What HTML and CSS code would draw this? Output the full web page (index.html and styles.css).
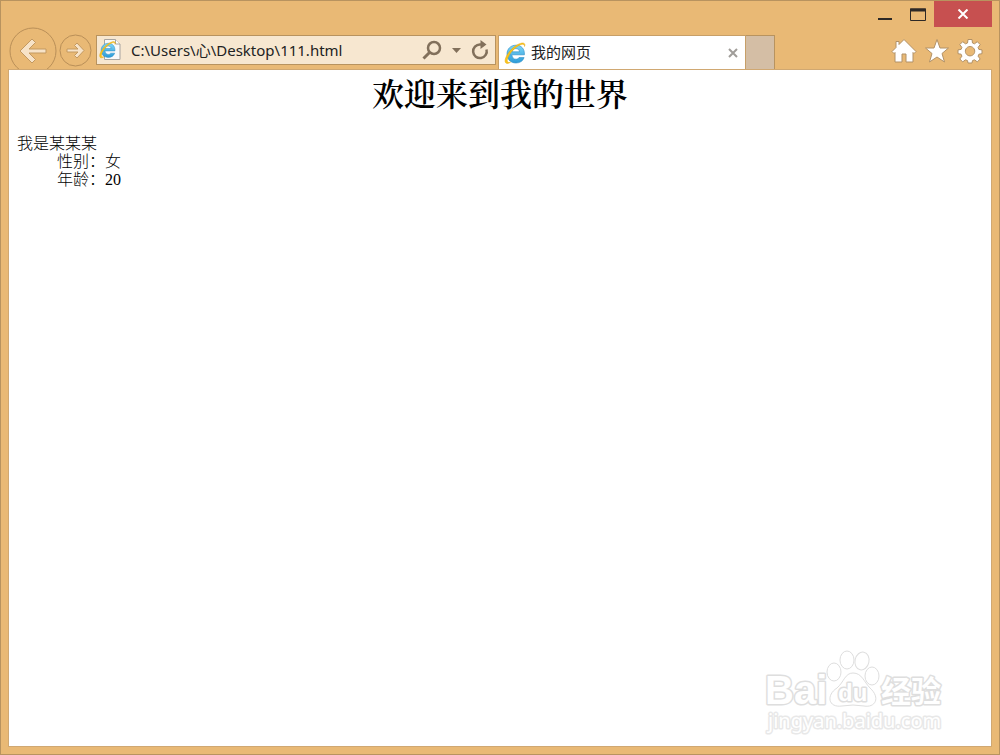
FILE: index.html
```html
<!DOCTYPE html>
<html lang="zh-CN">
<head>
<meta charset="utf-8">
<title>我的网页</title>
<link rel="stylesheet" href="styles.css">
</head>
<body>
<svg class="defs" aria-hidden="true">
  <defs>
    <linearGradient id="blue" x1="0" y1="0" x2="0" y2="1"><stop offset="0" stop-color="#7fd6f7"/><stop offset="1" stop-color="#2b9bd8"/></linearGradient>
    <symbol id="ie" viewBox="0 0 24 24">
      <path d="M7.200 13.800H21.400C21.800 7.800 18.300 4.200 13 4.200C7.500 4.200 4 8 4 13C4 18.300 7.600 22 13 22C17 22 20 20 21.100 16.600H16C15.300 17.700 14.400 18.200 13 18.200C10.600 18.200 9.200 16.600 9 14.200M9.100 10.800C9.500 8.800 10.800 7.600 12.900 7.600C15 7.600 16.200 8.800 16.500 10.800Z" fill="url(#blue)" fill-rule="evenodd" stroke="#2589c4" stroke-width=".6"/>
      <path d="M21.500 5.500C22.600 3 21.200 1.200 17.500 2.400C11 4.200 3.500 12.500 2.200 18.500C1.500 22.500 4 23.600 7.500 21.200C4.800 22 3.600 20.800 4.600 17.600C6.200 12.400 12.500 5.600 17.600 3.700C20.200 2.700 21.600 3.500 21.500 5.500Z" fill="#fbc51b" stroke="#e4a60c" stroke-width=".5"/>
    </symbol>
  </defs>
</svg>
<div class="window">
  <header class="titlebar">
    <button class="caption" aria-label="最小化"><svg width="14" height="16"><path d="M0 13h14" stroke="#2d2926" stroke-width="2"/></svg></button>
    <button class="caption" aria-label="最大化"><svg width="16" height="16"><path d="M.5 3h15v11.500h-15z" fill="none" stroke="#2d2926"/><path d="M0 4h16" stroke="#2d2926" stroke-width="3"/></svg></button>
    <button class="caption close" aria-label="关闭"><svg width="12" height="10"><path d="M1.500 .5l9 9M10.500 .5l-9 9" stroke="#fff" stroke-width="2"/></svg></button>
  </header>
  <nav class="toolbar">
    <button class="back" aria-label="后退"><svg width="48" height="48" viewBox="0 0 48 48"><circle cx="24" cy="24" r="23" fill="none" stroke="#b98f58"/><path d="M11 24L23 12L26.500 15.500L20 22H37V26H20L26.500 32.500L23 36Z" fill="#f7e3c8" stroke="#c39961"/></svg></button>
    <button class="forward" aria-label="前进"><svg width="33" height="33" viewBox="0 0 33 33"><circle cx="16.500" cy="16.500" r="15.500" fill="none" stroke="#b98f58"/><path d="M25 16.500L18 9L15.500 11.500L19 15H8V18H19L15.500 21.500L18 24Z" fill="#f7e3c8" stroke="#c39961"/></svg></button>
    <form class="address">
      <svg width="22" height="24" viewBox="0 0 22 24" aria-hidden="true"><path d="M5.500 1.500h11l4.500 4.500v15.500h-15.500z" fill="#f9f9f9" stroke="#a8a49f"/><path d="M16.500 1.500v4.500h4.500" fill="#fff" stroke="#a8a49f"/><use href="#ie" x="-1" y="2" width="19" height="19"/></svg>
      <input class="url" type="text" aria-label="地址" value="C:\Users\心\Desktop\111.html">
      <button type="button" aria-label="搜索"><svg width="20" height="20"><circle cx="12" cy="8" r="6" fill="none" stroke="#82705b" stroke-width="2.500"/><path d="M7.500 12.500L1.500 18.500" stroke="#82705b" stroke-width="3"/></svg></button>
      <button type="button" aria-label="显示地址"><svg width="9" height="5"><path d="M0 0h9L4.500 5z" fill="#82705b"/></svg></button>
      <button type="button" aria-label="刷新"><svg width="18" height="20"><path d="M15.500 9.500A6.800 6.800 0 1 1 9 4.500H11" fill="none" stroke="#82705b" stroke-width="2.500"/><path d="M9.500 0L15.500 4.500L9.500 9z" fill="#82705b"/></svg></button>
    </form>
    <div class="tab">
      <svg width="24" height="24" aria-hidden="true"><use href="#ie" width="24" height="24"/></svg>
      <span class="tab-title">我的网页</span>
      <button aria-label="关闭选项卡"><svg width="10" height="10"><path d="M1 1l8 8M9 1l-8 8" stroke="#a09d99" stroke-width="2"/></svg></button>
    </div>
    <button class="new-tab" aria-label="新建选项卡"></button>
    <div class="tools">
      <button aria-label="主页"><svg width="26" height="26" viewBox="0 0 26 26"><path d="M1 13.500L5 9.500V3.500H8V6.500L13 1.500L25 13.500L23 15.500L22 14.500V24H15V16H11V24H4V14.500L3 15.500Z" fill="#fff" stroke="#b29166"/></svg></button>
      <button aria-label="收藏夹"><svg width="26" height="26" viewBox="0 0 26 26"><path d="M13 1.500L16 10H24.500L18 15.500L20.500 24L13 19L5.500 24L8 15.500L1.500 10H10Z" fill="#fff" stroke="#b29166"/></svg></button>
      <button aria-label="工具"><svg width="26" height="26" viewBox="0 0 26 26"><path d="M11 1.500h4l.5 3.500 2 .8 2.800-2.100 2.900 2.900-2.100 2.800.8 2 3.100.5v3.800l-3.100.5-.8 2 2.100 2.800-2.900 2.900-2.800-2.100-2 .8-.5 2.400h-4l-.5-2.400-2-.8-2.800 2.100-2.900-2.900 2.100-2.800-.8-2-3.100-.5v-3.800l3.100-.5.8-2-2.100-2.800 2.900-2.900 2.800 2.100 2-.8zM13 8.500a4.700 4.700 0 1 0 .1 0z" fill="#fff" fill-rule="evenodd" stroke="#b29166"/></svg></button>
    </div>
  </nav>
  <main class="page">
    <h1>欢迎来到我的世界</h1>
    <dl><dt>我是某某某</dt><dd>性别：女</dd><dd>年龄：20</dd></dl>
    <svg class="watermark" width="188" height="96" viewBox="0 0 188 96" role="img" aria-label="Baidu 经验">
      <g fill="#fff" stroke="#dedede">
        <text class="mark" x="5" y="62" font-size="40">Bai</text>
        <ellipse cx="74" cy="30" rx="7" ry="9"/><ellipse cx="87" cy="18" rx="7" ry="9"/><ellipse cx="102" cy="19" rx="7" ry="9" transform="rotate(12 102 19)"/><ellipse cx="112" cy="34" rx="7" ry="9"/>
        <path d="M93 31C102 31 104 40 110 46C121 56 115 66 104 64Q93 62 82 64C68 66 66 53 77 46C84 40 85 31 93 31Z"/>
        <text class="mark" x="78" y="59" font-size="24">du</text>
        <text class="mark" x="121" y="60" font-size="30">经验</text>
        <text class="site" x="8" y="86" font-size="20">jingyan.baidu.com</text>
      </g>
    </svg>
  </main>
</div>
</body>
</html>
```
FILE: styles.css
```css
* { box-sizing: border-box; }
body { margin: 0; }
.defs { position: absolute; width: 0; height: 0; }
svg { display: block; flex: none; }
button { display: flex; align-items: center; justify-content: center; padding: 0; border: 0; background: none; }
.window {
  display: flex;
  flex-direction: column;
  min-height: 100vh;
  padding: 0 7px;
  border: 1px solid #b8935f;
  background: #e9b975;
  font-family: "Open Sans", "Noto Sans CJK SC", sans-serif;
}
.titlebar { display: flex; justify-content: flex-end; height: 26px; }
.caption { width: 33px; }
.close { width: 58px; background: #c75050; }
.toolbar { display: flex; align-items: flex-start; height: 42px; overflow: hidden; }
.back { width: 50px; height: 48px; }
.forward { width: 34px; height: 46px; }
.address {
  display: flex;
  align-items: center;
  gap: 10px;
  width: 400px;
  height: 30px;
  margin: 8px 2px 0 4px;
  padding: 0 6px 0 2px;
  border: 1px solid #b8935f;
  background: #f7e7d0;
}
.url { flex: 1; min-width: 0; padding: 0 0 2px; border: 0; outline: 0; background: none; color: #222; font: 15px "Noto Sans", "Noto Sans CJK SC", sans-serif; }
.tab {
  display: flex;
  align-items: center;
  gap: 4px;
  width: 248px;
  height: 34px;
  margin-top: 8px;
  padding: 0 7px 0 4px;
  border: 1px solid #c79f68;
  border-bottom: 0;
  background: #fff;
}
.tab-title { flex: 1; padding-bottom: 2px; color: #222; font-size: 15px; }
.new-tab { width: 29px; height: 34px; margin-top: 8px; border: 1px solid #b8935f; border-width: 1px 1px 0 0; background: #d4bea5; }
.tools { display: flex; gap: 7px; margin: 11px 9px 0 auto; }
.page {
  display: flex;
  flex: 1;
  flex-direction: column;
  margin-bottom: 7px;
  padding: 0 8px;
  border: 1px solid #d0a872;
  background: #fff;
  color: #000;
  font: 16px/18px "Liberation Serif", "Noto Sans CJK SC", serif;
}
h1 { margin: 0; font: 600 32px/44px "Noto Serif CJK SC", "Noto Sans CJK SC", serif; text-align: center; }
dl { margin: 21px 0 0; }
dt, dd { font-weight: 300; }
dd { margin: 0 0 0 40px; }
.watermark { margin: auto 35px 8px auto; }
.mark, .site { paint-order: stroke; stroke-width: 3px; stroke-linejoin: round; }
.mark { font-family: "Liberation Sans", "Noto Sans CJK SC", sans-serif; font-weight: 700; }
.site { stroke: #e8e8e8; font-family: "Noto Sans", sans-serif; }
```
